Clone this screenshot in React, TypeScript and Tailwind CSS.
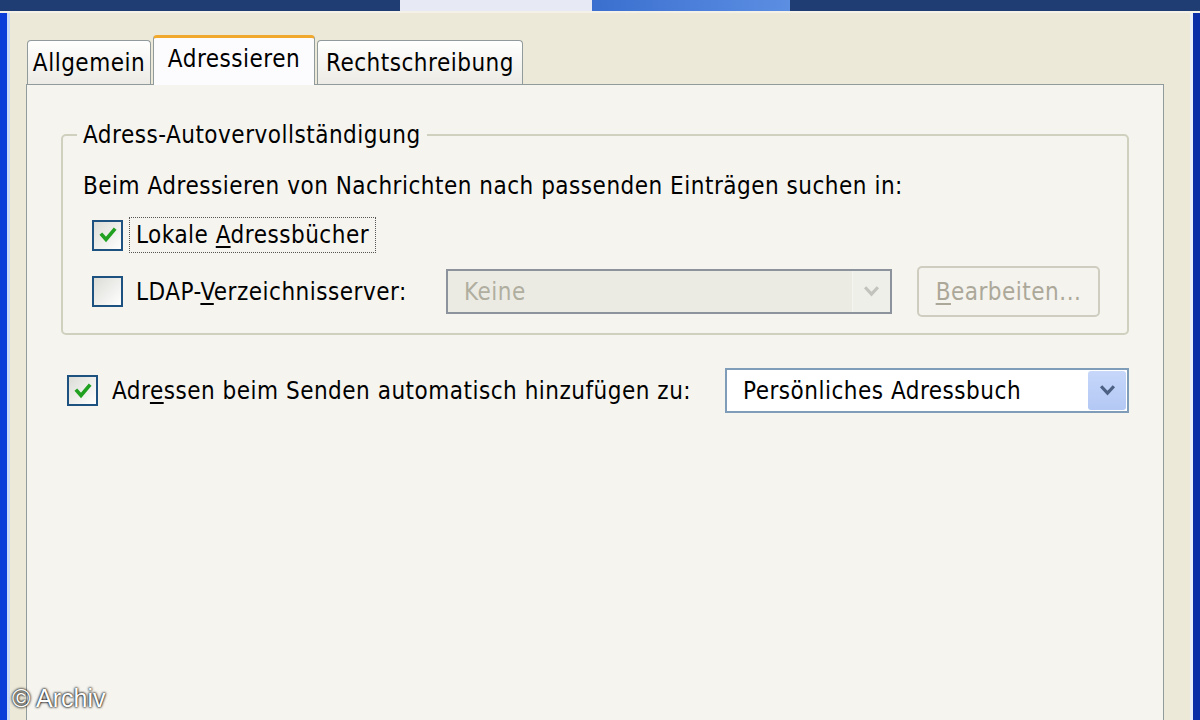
import React from "react";

const font = { fontFamily: '"DejaVu Sans Condensed", "DejaVu Sans", Tahoma, sans-serif' };

function Check({ checked }: { checked?: boolean }) {
  return (
    <div className="flex h-[31px] w-[31px] shrink-0 items-center justify-center border-2 border-[#1c5180] bg-gradient-to-br from-[#dcdcd7] to-white">
      {checked && (
        <svg viewBox="0 0 20 20" className="h-[20px] w-[20px]">
          <path d="M4 10 L8 14.5 L16 5" fill="none" stroke="#21a121" strokeWidth="3.6" strokeLinecap="square" />
        </svg>
      )}
    </div>
  );
}

function Chevron({ color }: { color: string }) {
  return (
    <svg viewBox="0 0 16 12" className="h-[13px] w-[17px]">
      <path d="M2 2 L8 8.5 L14 2" fill="none" stroke={color} strokeWidth="3" />
    </svg>
  );
}

function Tab({ label, width, active }: { label: string; width: string; active?: boolean }) {
  if (active) {
    return (
      <div
        className={`relative -mb-[1px] flex h-[50px] items-center justify-center rounded-t-[4px] border-x border-t-[3px] border-x-[#919b9c] border-t-[#f0a92c] bg-[#fcfcfe] pb-[6px] ${width}`}
      >
        <span>{label}</span>
      </div>
    );
  }
  return (
    <div
      className={`flex h-[44px] items-center justify-center rounded-t-[4px] border-x border-t border-[#919b9c] bg-gradient-to-b from-white to-[#ecebe5] ${width}`}
    >
      <span>{label}</span>
    </div>
  );
}

export default function App() {
  return (
    <div
      className="relative flex h-[720px] w-[1200px] flex-col overflow-hidden bg-[#ece9d8] text-[24px] leading-[28px] tracking-[0.5px] text-black"
      style={font}
    >
      {/* title strip */}
      <div className="flex h-[11px] shrink-0">
        <div className="w-[400px] bg-[#1f3d73]" />
        <div className="w-[192px] bg-[#e7eaf5]" />
        <div className="w-[198px] bg-gradient-to-r from-[#3a6fcf] to-[#5c8ee2]" />
        <div className="flex-1 bg-[#1f3d73]" />
      </div>
      <div className="h-[2px] shrink-0 bg-[#f4f2e8]" />

      <div className="flex flex-1">
        <div className="w-[8px] bg-[#0b3ed8]" />
        <div className="w-[3px] bg-[#c9dbf7]" />
        <div className="flex flex-1 flex-col pl-[16px] pr-[26px]">
          {/* tabs */}
          <div className="flex items-end gap-[2px] pt-[22px] pl-[1px]">
            <Tab label="Allgemein" width="w-[124px]" />
            <Tab label="Adressieren" width="w-[162px]" active />
            <Tab label="Rechtschreibung" width="w-[206px]" />
          </div>

          {/* panel */}
          <div className="flex flex-1 flex-col border-x border-t border-[#919b9c] bg-[#f6f4ef] px-[34px] pt-[36px]">
            <fieldset className="rounded-[5px] border-2 border-[#d0d0bf] px-[20px] pb-[16px] pt-[23px]">
              <legend className="-ml-[6px] px-[6px]">Adress-Autovervollständigung</legend>
              <div>Beim Adressieren von Nachrichten nach passenden Einträgen suchen in:</div>

              <div className="mt-[17px] flex items-center pl-[9px]">
                <Check checked />
                <div className="ml-[6px] border border-dotted border-[#555] px-[6px] py-[3px]">
                  Lokale <span className="underline underline-offset-[3px]">A</span>dressbücher
                </div>
              </div>

              <div className="mt-[13px] flex items-center pl-[9px]">
                <Check />
                <div className="ml-[13px] w-[310px]">
                  LDAP-<span className="underline underline-offset-[3px]">V</span>erzeichnisserver:
                </div>
                <div className="flex h-[45px] w-[446px] items-center border-2 border-[#8d939c] bg-[#ebebe4] pl-[16px] text-[#b0ae9f]">
                  <span className="flex-1">Keine</span>
                  <div className="flex h-full w-[38px] items-center justify-center border-l border-[#f4f4f0] bg-[#efefea]">
                    <Chevron color="#c3c3bd" />
                  </div>
                </div>
                <div className="ml-[25px] flex h-[51px] w-[183px] items-center justify-center rounded-[5px] border-2 border-[#cfcdc0] bg-[#f4f3ee] text-[#aca899]">
                  <span>
                    <span className="underline underline-offset-[3px]">B</span>earbeiten...
                  </span>
                </div>
              </div>
            </fieldset>

            <div className="mt-[33px] flex items-center pl-[6px]">
              <Check checked />
              <div className="ml-[14px] w-[613px]">
                Adr<span className="underline underline-offset-[3px]">e</span>ssen beim Senden automatisch hinzufügen zu:
              </div>
              <div className="flex h-[45px] w-[404px] items-center border-2 border-[#7f9db9] bg-white pl-[16px]">
                <span className="flex-1">Persönliches Adressbuch</span>
                <div className="mr-[1px] flex h-[39px] w-[38px] items-center justify-center rounded-[3px] bg-gradient-to-b from-[#c6d7fa] to-[#b3c8f4]">
                  <Chevron color="#4d6185" />
                </div>
              </div>
            </div>
          </div>
        </div>
        <div className="w-[3px] bg-[#e9eef8]" />
        <div className="w-[8px] bg-[#0a2ea8]" />
      </div>

      <div
        className="absolute bottom-[8px] left-[12px] text-[25px] tracking-normal text-white [text-shadow:0_0_3px_#000,0_0_2px_#000]"
        style={{ fontFamily: '"Liberation Sans", Arial, sans-serif' }}
      >
        © Archiv
      </div>
    </div>
  );
}
